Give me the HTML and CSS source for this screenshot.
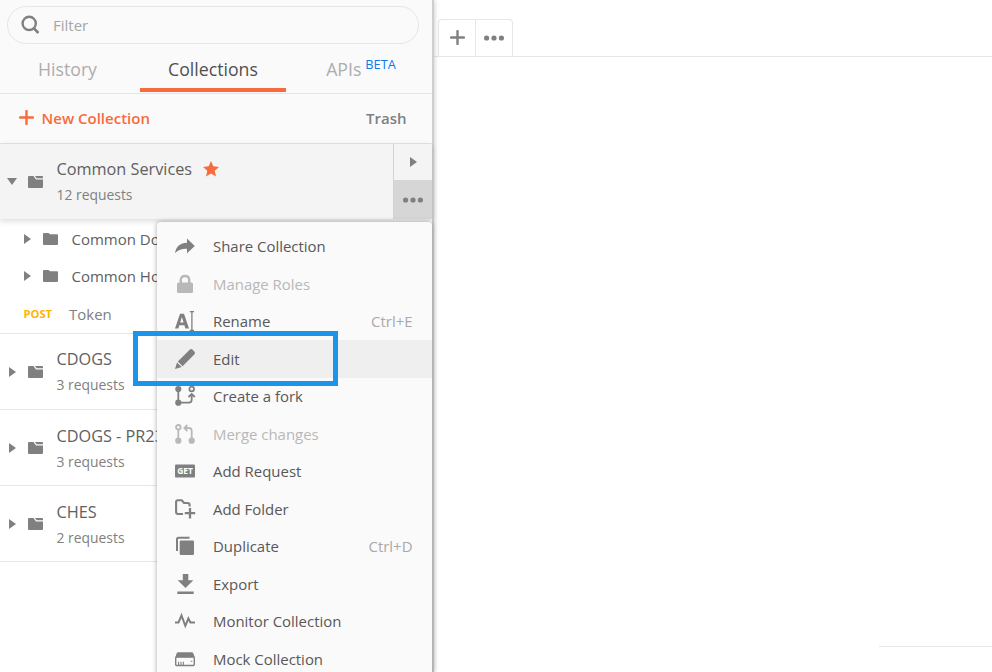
FILE: index.html
```html
<!DOCTYPE html>
<html lang="en">
<head>
<meta charset="utf-8">
<title>Collections</title>
<link rel="stylesheet" href="styles.css">
</head>
<body>
<svg class="defs" width="0" height="0">
  <symbol id="caret" viewBox="0 0 7 10"><path d="M0 0L7 5L0 10z"/></symbol>
  <symbol id="stack" viewBox="0 0 15 12"><path d="M0 1.2Q0 0 1 0H5.5L8 3.5H15V11Q15 12 14 12H1Q0 12 0 11zM7 0H14Q15 0 15 1V2.2H8.6z"/></symbol>
  <symbol id="folder" viewBox="0 0 15 12"><path d="M0 1Q0 0 1 0H5.5L7 1.3H14Q15 1.3 15 2.3V11Q15 12 14 12H1Q0 12 0 11z"/></symbol>
  <symbol id="dots" viewBox="0 0 20 6"><circle cx="2.6" cy="3" r="2.6"/><circle cx="10" cy="3" r="2.6"/><circle cx="17.4" cy="3" r="2.6"/></symbol>
  <symbol id="plus" viewBox="0 0 15 15"><path d="M7.5 1V14M1 7.5H14" fill="none" stroke="currentColor" stroke-width="2.4" stroke-linecap="round"/></symbol>
</svg>
<div class="app">
  <aside class="sidebar">
    <div class="filter">
      <svg width="20" height="20" viewBox="0 0 20 20"><circle cx="8.2" cy="8.4" r="6.6" fill="none" stroke="currentColor" stroke-width="2.4"/><path d="M12.8 13.2L17.4 18" stroke="currentColor" stroke-width="2.6"/></svg>
      <span>Filter</span>
    </div>
    <nav class="tabs">
      <div class="tab"><span>History</span></div>
      <div class="tab active"><span>Collections</span></div>
      <div class="tab"><span>APIs</span><span class="beta">BETA</span></div>
    </nav>
    <div class="actions">
      <div class="new"><svg width="15" height="15"><use href="#plus"/></svg><span>New Collection</span></div>
      <span class="trash">Trash</span>
    </div>
    <div class="list">
      <div class="item selected">
        <svg class="open" width="10" height="7" viewBox="0 0 10 7"><path d="M0 0H10L5 7z"/></svg>
        <svg class="stack" width="15" height="12"><use href="#stack"/></svg>
        <div class="info"><div class="name">Common Services<svg class="star" width="16" height="16" viewBox="0 0 16 16"><path d="M8 0L10.3 5.3L16 5.9L11.7 9.7L13 15.5L8 12.5L3 15.5L4.3 9.7L0 5.9L5.7 5.3z"/></svg></div><div class="count">12 requests</div></div>
        <div class="side">
          <div><svg width="7" height="10"><use href="#caret"/></svg></div>
          <div class="more"><svg width="20" height="6"><use href="#dots"/></svg></div>
        </div>
      </div>
      <div class="children">
        <div class="child"><svg class="caret" width="7" height="10"><use href="#caret"/></svg><svg class="folder" width="15" height="12"><use href="#folder"/></svg><span>Common Document</span></div>
        <div class="child"><svg class="caret" width="7" height="10"><use href="#caret"/></svg><svg class="folder" width="15" height="12"><use href="#folder"/></svg><span>Common Hosted</span></div>
        <div class="child request"><b>POST</b><span>Token</span></div>
      </div>
      <div class="item raised"><svg class="closed" width="7" height="10"><use href="#caret"/></svg><svg class="stack" width="15" height="12"><use href="#stack"/></svg><div class="info"><div class="name">CDOGS</div><div class="count">3 requests</div></div></div>
      <div class="item"><svg class="closed" width="7" height="10"><use href="#caret"/></svg><svg class="stack" width="15" height="12"><use href="#stack"/></svg><div class="info"><div class="name">CDOGS - PR23</div><div class="count">3 requests</div></div></div>
      <div class="item"><svg class="closed" width="7" height="10"><use href="#caret"/></svg><svg class="stack" width="15" height="12"><use href="#stack"/></svg><div class="info"><div class="name">CHES</div><div class="count">2 requests</div></div></div>
    </div>
  </aside>
  <main class="main">
    <div class="strip">
      <div class="buttons">
        <div><svg width="15" height="15"><use href="#plus"/></svg></div>
        <div><svg width="20" height="6"><use href="#dots"/></svg></div>
      </div>
    </div>
    <div class="rule"></div>
  </main>
</div>
<div class="menu">
  <div class="entry"><svg viewBox="0 0 20 20"><path d="M0 17C1 10.5 5 7.2 12 6.8V2.4L19.8 10L12 17.2V12.8C7 12.6 4 13.6 0 17z"/></svg><span>Share Collection</span></div>
  <div class="entry off"><svg viewBox="0 0 20 20"><rect x="2" y="8.5" width="16" height="10.5" rx="1.5"/><path d="M5.8 9V6Q5.8 2 10 2T14.2 6V9" fill="none" stroke="currentColor" stroke-width="2.4"/></svg><span>Manage Roles</span></div>
  <div class="entry"><svg viewBox="0 0 20 20"><path fill-rule="evenodd" d="M0 17.5L5 2.8H9L14 17.5H10.4L9.4 14.3H4.4L3.4 17.5zM5.2 11.6H8.6L6.9 6z"/><path d="M14.8 .7H19M16.9 .7V19.5M14.8 19.3H19" fill="none" stroke="currentColor" stroke-width="1.3"/></svg><span>Rename</span><kbd>Ctrl+E</kbd></div>
  <div class="entry hover"><svg viewBox="0 0 20 20"><path d="M2.8 12.6L14.4 1Q16 -.6 17.4 .6L19.3 2.5Q20.8 4 19.3 5.6L7.6 17.2zM2 13.6L6.7 18L0 20z"/></svg><span>Edit</span></div>
  <div class="entry"><svg viewBox="0 0 20 20"><circle cx="3.3" cy="3" r="3.1"/><circle cx="3.3" cy="16.7" r="3.1"/><g fill="none" stroke="currentColor" stroke-width="1.8"><path d="M3.3 3V16.7H14Q16.7 16.7 16.7 13.5V9M13.5 11L16.7 8L19.8 11"/><circle cx="16.7" cy="3" r="2.3"/></g></svg><span>Create a fork</span></div>
  <div class="entry off"><svg viewBox="0 0 20 20"><circle cx="3.3" cy="16.7" r="3.1"/><circle cx="16.7" cy="16.7" r="3.1"/><g fill="none" stroke="currentColor" stroke-width="1.8"><circle cx="3.3" cy="3.3" r="2.3"/><path d="M3.3 5.5V16.7M16.7 16V7Q16.7 4 14 4H9.5M12.4 .8L9.3 4L12.4 7.2"/></g></svg><span>Merge changes</span></div>
  <div class="entry"><svg viewBox="0 0 20 20"><rect y="3.5" width="20" height="13" rx="1"/><text x="10" y="13.2" text-anchor="middle">GET</text></svg><span>Add Request</span></div>
  <div class="entry"><svg viewBox="0 0 20 20"><path d="M8 15H3.2Q1.1 15 1.1 13V2.9Q1.1 1.3 2.8 1.3H6.8L9 4H12.7Q14.6 4 14.6 6V7.5" fill="none" stroke="currentColor" stroke-width="2.1"/><path d="M15 9V19.5M9.8 14.2H20.2" fill="none" stroke="currentColor" stroke-width="2.3"/></svg><span>Add Folder</span></div>
  <div class="entry"><svg viewBox="0 0 20 20"><rect x="4.7" y="4.5" width="14.3" height="14.5" rx="1.2"/><path d="M2 15V3.3Q2 1.8 3.5 1.8H14.5" fill="none" stroke="currentColor" stroke-width="2"/></svg><span>Duplicate</span><kbd>Ctrl+D</kbd></div>
  <div class="entry"><svg viewBox="0 0 20 20"><path d="M7.8 0H13.3V6.2H18.3L10.5 14L2.7 6.2H7.8zM2.3 17.5H18.7V20H2.3z"/></svg><span>Export</span></div>
  <div class="entry"><svg viewBox="0 0 20 20"><path d="M0 11.5H3.5L6.5 4.5L10.3 14.8L13.4 7.5L15.4 11.5H20" fill="none" stroke="currentColor" stroke-width="2"/></svg><span>Monitor Collection</span></div>
  <div class="entry"><svg viewBox="0 0 20 20"><path d="M.3 8.2L1.6 4.6Q2.1 3.3 3.5 3.3H16.5Q17.9 3.3 18.4 4.6L19.7 8.2z"/><rect x=".7" y="8" width="18.6" height="8.5" rx="1" fill="none" stroke="currentColor" stroke-width="1.4"/><path d="M3.6 12.8V16M6 12.8V16M8.4 12.8V16M15.7 12.2H17.3" fill="none" stroke="currentColor" stroke-width="1.1"/></svg><span>Mock Collection</span></div>
</div>
<div class="highlight"></div>
</body>
</html>
```
FILE: styles.css
```css
* { box-sizing: border-box; }
html, body { height: 100%; overflow: hidden; }
body { margin: 0; background: #fff; font-family: "Open Sans", "Noto Sans", sans-serif; color: #585858; }
svg { display: block; flex: none; fill: currentColor; overflow: visible; }
.defs { position: absolute; }
.app { display: flex; height: 672px; }
.sidebar { width: 434px; flex: none; background: #fafafa; border-right: 2px solid #cfcfcf; box-shadow: 0 0 5px rgba(0,0,0,.25); z-index: 1; display: flex; flex-direction: column; }
.filter { width: 412px; height: 38px; margin: 6px 0 0 7px; border: 1px solid #e6e6e6; border-radius: 19px; display: flex; align-items: center; padding-left: 13px; gap: 12px; color: #808080; font-size: 15px; flex: none; }
.filter span { color: #a6a6a6; }
.tabs { height: 50px; flex: none; border-bottom: 1px solid #e6e6e6; display: flex; }
.tab { width: 146px; height: 48px; display: flex; justify-content: center; font-size: 17.7px; line-height: 50px; color: #adadad; white-space: nowrap; }
.tab:first-child { width: 140px; padding-right: 5px; }
.tab.active { color: #505050; border-bottom: 4px solid #f76b3c; }
.tab .beta { font-size: 12.8px; font-weight: 500; line-height: 40px; color: #097bed; margin-left: 4px; }
.tab:last-child { padding-left: 4px; }
.actions { height: 50px; flex: none; border-bottom: 1px solid #e6e6e6; display: flex; justify-content: space-between; align-items: center; padding: 0 25.5px 0 19px; font-size: 15px; font-weight: 600; color: #808080; }
.actions span { line-height: 20px; padding-bottom: 2px; }
.new { display: flex; gap: 7.5px; align-items: center; color: #f76b3c; }
.new svg { margin-top: -2px; }
.list { flex: 1; background: #fff; }
.item { height: 76px; border-bottom: 1px solid #e6e6e6; display: flex; align-items: center; padding-left: 9px; color: #808080; }
.item .closed { margin-right: 12px; }
.item .open { margin-left: -2px; margin-right: 11px; }
.info { margin-left: 13.5px; flex: 1; padding-top: 1px; }
.name { font-size: 16.25px; line-height: 26px; color: #606060; display: flex; align-items: center; }
.count { font-size: 13.9px; line-height: 24px; margin-top: 1px; }
.raised .info, .selected .info { padding-top: 0; margin-top: -1px; }
.star { margin-left: 11px; color: #f76b3c; }
.selected { height: 75px; margin-bottom: 1px; background: #f4f4f4; border-bottom: 0; box-shadow: 0 2px 6px rgba(0,0,0,.15); position: relative; }
.side { width: 39px; height: 75px; border-left: 1px solid #d3d3d3; display: flex; flex-direction: column; }
.side div { flex: none; height: 36px; display: flex; align-items: center; justify-content: center; }
.side .more { height: 39px; background: #d6d6d6; }
.children { height: 114px; border-bottom: 1px solid #e6e6e6; }
.child { height: 37.5px; display: flex; align-items: center; padding-left: 24px; font-size: 15px; color: #606060; white-space: nowrap; }
.child svg { color: #808080; }
.folder { margin: 0 13.5px 0 12px; }
.request { color: #808080; padding-left: 23.5px; }
.request b { font-size: 11.2px; color: #ffb400; width: 45.5px; }
.main { flex: 1; display: flex; flex-direction: column; justify-content: space-between; color: #808080; }
.strip { height: 57px; border-bottom: 1px solid #e6e6e6; padding: 19px 0 0 4px; }
.buttons { width: 75px; height: 37px; border: 1px solid #e6e6e6; border-bottom: 0; border-radius: 4px 4px 0 0; display: flex; }
.buttons div { flex: 1; display: flex; align-items: center; justify-content: center; padding-bottom: 1px; }
.buttons div + div { border-left: 1px solid #e6e6e6; padding-bottom: 0; }
.rule { height: 1px; background: #e6e6e6; margin: 0 0 25px 445px; }
.menu { position: absolute; z-index: 2; left: 157px; top: 222px; width: 275px; height: 470px; background: #fafafa; border-radius: 4px 4px 0 0; box-shadow: 0 0 5px rgba(0,0,0,.35); padding-top: 5.5px; }
.entry { height: 37.5px; display: flex; align-items: center; padding: 0 19.5px 0 18px; font-size: 14.95px; white-space: nowrap; }
.entry svg { width: 20px; height: 20px; margin-right: 18px; color: #808080; }
.entry.off, .entry.off svg { color: #b8b8b8; }
.entry.hover { background: #efefef; }
.entry text { font-size: 8.4px; font-weight: 700; fill: #fff; }
kbd { margin-left: auto; font: inherit; color: #a9a9a9; }
.highlight { position: absolute; z-index: 3; left: 133px; top: 331px; width: 205px; height: 55px; border: 5px solid #1b95e9; }
```
